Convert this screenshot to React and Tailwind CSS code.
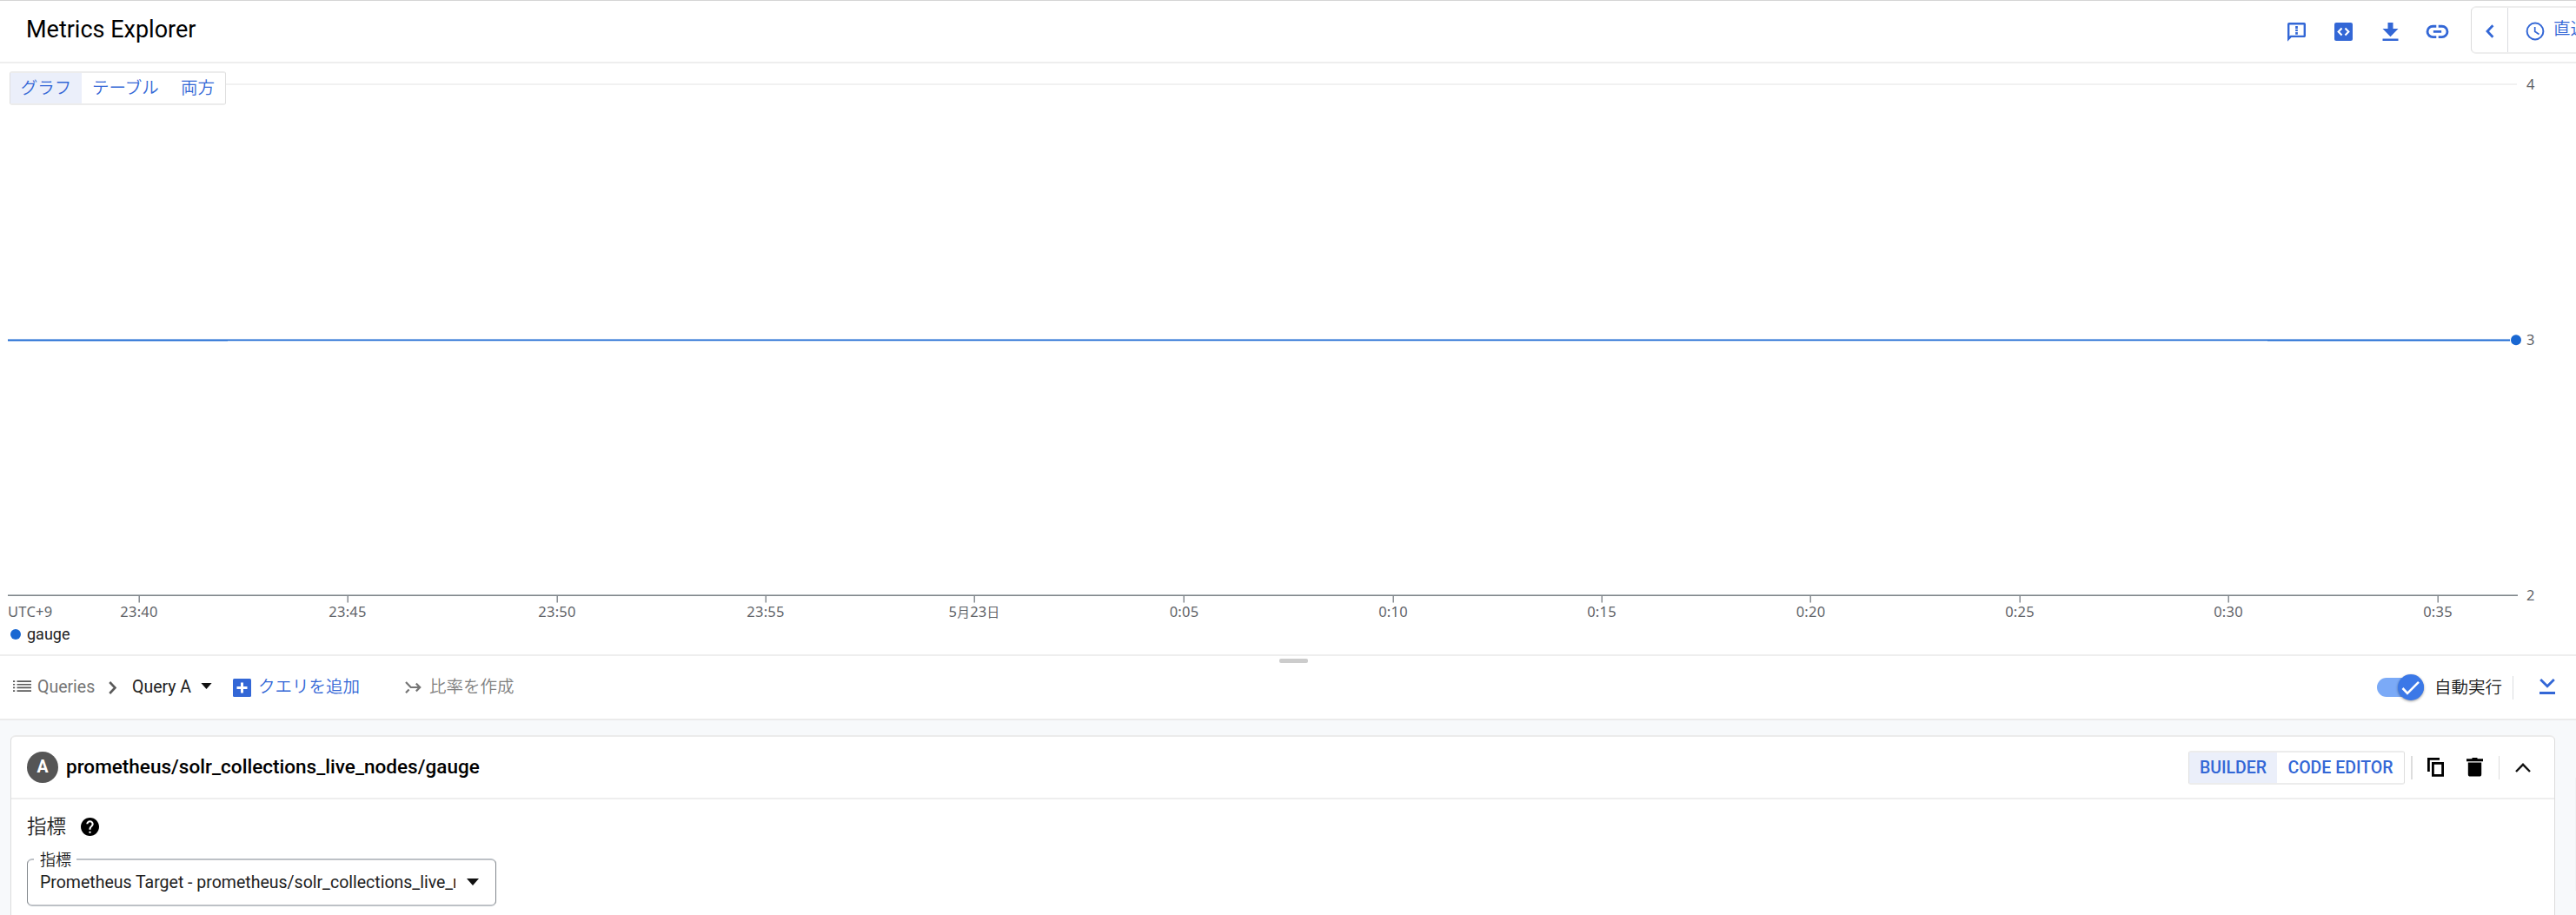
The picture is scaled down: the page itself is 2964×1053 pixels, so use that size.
import React from "react";

const JA = "font-[350]";

const ticks = [
  [160, "23:40"],
  [400, "23:45"],
  [641, "23:50"],
  [881, "23:55"],
  [1121, null],
  [1362.5, "0:05"],
  [1603, "0:10"],
  [1843, "0:15"],
  [2083.5, "0:20"],
  [2324, "0:25"],
  [2564, "0:30"],
  [2805, "0:35"],
];

function Icon({ children, className = "" }) {
  return (
    <svg viewBox="0 0 18 18" className={`size-[27px] shrink-0 ${className}`} fill="currentColor">
      {children}
    </svg>
  );
}

function Header() {
  return (
    <header className="flex h-[73px] items-center border-t border-b-2 border-t-[#d5d5d5] border-b-[#eeeeee] pl-[30px]">
      <h1 className="pb-[3px] text-[27px] leading-none text-black">Metrics Explorer</h1>
      <div className="ml-auto flex items-center gap-[27px] text-[#3367d6]">
        <Icon>
          <path d="M3.2 2.8h11.6a.4.4 0 0 1 .4.4v9a.4.4 0 0 1-.4.4H4.6L2.8 14.5V3.2a.4.4 0 0 1 .4-.4z" fill="none" stroke="currentColor" strokeWidth="1.6" />
          <path d="M2 12.5h3.3L2 16z M8.1 4.6h1.8v2.3H8.1z M8.1 7.3h1.8v1.4H8.1z M8.1 9.4h1.8v1.8H8.1z" />
        </Icon>
        <Icon>
          <rect x="2" y="2" width="14" height="14" rx="1.4" />
          <path d="M7.7 6.4 5.1 9l2.6 2.6M10.3 6.4 12.9 9l-2.6 2.6" fill="none" stroke="#fff" strokeWidth="1.4" />
        </Icon>
        <Icon>
          <path d="M7 2h4v4.6h4L9 12.9 3 6.6h4zM3 14.3h12V16H3z" />
        </Icon>
        <Icon>
          <path d="M8.2 4.8H5.5a4.15 4.15 0 0 0 0 8.3h2.7M9.8 4.8h2.7a4.15 4.15 0 0 1 0 8.3H9.8M5.9 8.95h6.2" fill="none" stroke="currentColor" strokeWidth="1.9" />
        </Icon>
      </div>
      <div className="mb-1 ml-[25px] flex h-[55px] w-[121px] items-stretch overflow-hidden rounded-l-[6px] border-y-2 border-l border-y-[#eeeeee] border-l-[#dcdcdc] text-[#3367d6]">
        <div className="flex w-[42px] shrink-0 items-center justify-center border-r border-[#dadce0]">
          <svg viewBox="0 0 10 16" className="mt-1 h-4 w-2.5" fill="none" stroke="currentColor" strokeWidth="2.8">
            <path d="M8.4 1.2 2 8l6.4 6.8" />
          </svg>
        </div>
        <div className="flex shrink-0 items-center pl-[19px]">
          <svg viewBox="0 0 24 24" className="mt-1 size-6" fill="none" stroke="currentColor" strokeWidth="2">
            <circle cx="12" cy="12" r="9.4" />
            <path d="M11.7 7v5.3l4.8 3.2" strokeWidth="1.7" />
          </svg>
          <span className={`ml-[9px] text-[19.5px] leading-none whitespace-nowrap ${JA}`}>直近</span>
        </div>
      </div>
    </header>
  );
}

function ViewTabs() {
  return (
    <div className={`absolute top-[9px] left-[11px] flex h-[39px] w-[249px] items-stretch rounded-[3px] border-x border-y-2 border-x-[#dfdfdf] border-y-[#ececec] bg-white text-[19.5px] text-[#3367d6] ${JA}`}>
      <span className="flex w-[82px] items-center justify-center bg-[#ebeffa] leading-none">グラフ</span>
      <span className="flex items-center pl-3 leading-none">テーブル</span>
      <span className="ml-auto flex items-center pr-3 leading-none">両方</span>
    </div>
  );
}

function Chart() {
  return (
    <section className="relative h-[682px] border-b-2 border-[#eeeeee]">
      <svg viewBox="0 73 2964 645" className="block h-[645px] w-full font-['Noto_Sans','Noto_Sans_CJK_JP',sans-serif] text-[16.5px] tracking-[0.25px]" fill="#5f6368">
        <rect x="11" y="96" width="2885" height="2" fill="#f1f1f1" />
        <rect x="9" y="390" width="2879" height="3" fill="#8cb3e8" />
        <rect x="9" y="391" width="2879" height="1" fill="#1967d2" />
        <rect x="262" y="392" width="2347" height="1" fill="#c5d9f3" />
        <circle cx="2895" cy="391.3" r="6" fill="#1967d2" />
        <rect x="9" y="684" width="2888" height="1" fill="#b4b9bd" />
        <rect x="9" y="685" width="2888" height="1" fill="#80868b" />
        {ticks.map(([x, label]) => (
          <g key={x}>
            <rect x={Math.floor(x) - 0.5} y="686" width="1.4" height="7.5" fill="#80868b" />
            {label ? (
              <text x={x} y="710" textAnchor="middle">{label}</text>
            ) : (
              <text x={x} y="710" textAnchor="middle">
                5<tspan fontSize="14.6">月</tspan>23<tspan fontSize="14.6">日</tspan>
              </text>
            )}
          </g>
        ))}
        <text x="9" y="710">UTC+9</text>
        <text x="2907" y="102.5">4</text>
        <text x="2907" y="397">3</text>
        <text x="2907" y="691">2</text>
      </svg>
      <div className="flex h-[23px] items-center pl-3">
        <span className="size-3 rounded-full bg-[#1967d2]" />
        <span className="ml-[7px] text-[18px] leading-none text-[#212121]">gauge</span>
      </div>
      <ViewTabs />
    </section>
  );
}

function QueryBar() {
  return (
    <div className="relative flex h-[74px] items-center border-b-2 border-[#ebebeb] text-[19.5px] leading-none whitespace-nowrap text-[#757575]">
      <div className="absolute top-[3px] left-[1472px] h-[5px] w-[33px] rounded-[2px] bg-[#cccccc]" />
      <svg viewBox="0 0 21 13" className="ml-[15px] h-[13px] w-[21px] -translate-y-0.5" fill="#5a5a5a">
        <path d="M0 .2h2.2v1.7H0zM0 3.9h2.2v1.7H0zM0 7.5h2.2v1.7H0zM0 11.2h2.2v1.7H0zM4.5.2H21v1.7H4.5zM4.5 3.9H21v1.7H4.5zM4.5 7.5H21v1.7H4.5zM4.5 11.2H21v1.7H4.5z" />
      </svg>
      <span className="ml-[7px] w-[67px]">Queries</span>
      <svg viewBox="0 0 9 15" className="ml-[15px] h-[15px] w-[9px]" fill="none" stroke="#5a5a5a" strokeWidth="2.6">
        <path d="M1.2 1 7.4 7.5 1.2 14" />
      </svg>
      <span className="ml-[18px] w-[68px] text-[#212121]">Query A</span>
      <svg viewBox="0 0 14 8" className="ml-[11px] h-[7px] w-[13px] -translate-y-0.5" fill="#111">
        <path d="M0 0h14L7 8z" />
      </svg>
      <svg viewBox="0 0 21 21" className="ml-6 size-[21px]" fill="#3367d6">
        <rect width="21" height="21" rx="1.5" />
        <path d="M10.5 4.5v12M4.5 10.5h12" stroke="#fff" strokeWidth="3" />
      </svg>
      <span className={`ml-2 w-[117px] text-[#3367d6] ${JA}`}>クエリを追加</span>
      <svg viewBox="0 0 19 14" className="ml-[52px] h-[14px] w-[19px]" fill="none" stroke="#757575" strokeWidth="2.2">
        <path d="M1 .9 6.7 7H17M12.8 2.6 17.2 7l-4.4 4.4M1 13.2l3.6-3.7" />
      </svg>
      <span className={`ml-[9px] text-[#808080] ${JA}`}>比率を作成</span>

      <div className="mr-6 ml-auto flex items-center">
        <div className="flex h-[22px] w-[54px] items-center justify-end rounded-full bg-[#7baaf7]">
          <div className="flex size-[30px] shrink-0 items-center justify-center rounded-full bg-[#3b78e7] shadow-[0_1px_3px_rgba(0,0,0,0.4)]">
            <svg viewBox="0 0 22 18" className="mt-0.5 h-[18px] w-[22px]" fill="none" stroke="#fff" strokeWidth="2.6">
              <path d="m1.5 9 5.5 5.8L20 1.8" />
            </svg>
          </div>
        </div>
        <span className={`ml-3 w-[79px] pt-0.5 text-[#212121] ${JA}`}>自動実行</span>
        <div className="ml-[11px] h-[27px] w-px bg-[#dadce0]" />
        <svg viewBox="0 0 18 18" className="ml-[30px] size-[18px] -translate-y-px" fill="none" stroke="#3367d6" strokeWidth="2.8">
          <path d="M1.2 1 9 8.8 16.8 1M0 16.5h18" />
        </svg>
      </div>
    </div>
  );
}

function QueryCard() {
  return (
    <div className="relative h-[224px] overflow-hidden bg-[#f7f9fb]">
      <div className="mt-[17px] ml-3 h-[260px] w-[2928px] rounded-[6px] border-x border-t-2 border-x-[#dcdcdc] border-t-[#ebebeb] bg-white">
        <div className="flex h-[72px] items-center border-b-2 border-[#eeeeee] pl-[18px]">
          <div className="flex size-9 items-center justify-center rounded-full bg-[#555555] text-[19.5px] leading-none font-bold text-white">A</div>
          <span className="ml-[9px] pb-0.5 text-[22.5px] leading-none font-medium tracking-[0.02px] text-black">prometheus/solr_collections_live_nodes/gauge</span>
          <div className="ml-auto flex h-[39px] w-[249px] items-stretch rounded-[3px] border-x border-y-2 border-x-[#dfdfdf] border-y-[#ececec] text-[19.5px] leading-none font-medium text-[#3367d6]">
            <span className="flex w-[101px] items-center justify-center bg-[#ebeffa] pt-0.5">BUILDER</span>
            <span className="flex flex-1 items-center justify-center pt-0.5">CODE EDITOR</span>
          </div>
          <div className="ml-[7px] h-[27px] w-0.5 bg-[#dddddd]" />
          <svg viewBox="0 0 19 22" className="ml-[17px] h-[22px] w-[19px]" fill="none" stroke="#000" strokeWidth="2.8">
            <path d="M1.4 16V1.4H14M6.4 6.4h11.2v14H6.4z" />
          </svg>
          <svg viewBox="0 0 19 22" className="ml-[26px] h-[22px] w-[19px]" fill="#000">
            <path d="M6.5 0h6v1.2H19v3H0v-3h6.5zM1.8 5.4h15.4V19a2.6 2.6 0 0 1-2.6 2.6H4.4A2.6 2.6 0 0 1 1.8 19z" />
          </svg>
          <div className="ml-[18px] h-[27px] w-px bg-[#dddddd]" />
          <svg viewBox="0 0 18 11" className="mr-[27px] ml-[18px] h-[11px] w-[18px]" fill="none" stroke="#111" strokeWidth="2.4">
            <path d="M1 10 9 1.8l8 8.2" />
          </svg>
        </div>
        <div className="pt-5 pl-[18px]">
          <div className="flex h-[22px] items-center">
            <span className={`text-[22.5px] leading-none text-[#212121] ${JA}`}>指標</span>
            <svg viewBox="2 2 20 20" className="ml-[17px] size-[21px]" fill="#000">
              <path d="M12 2C6.48 2 2 6.48 2 12s4.48 10 10 10 10-4.48 10-10S17.52 2 12 2zm1 17h-2v-2h2v2zm2.07-7.75-.9.92C13.45 12.9 13 13.5 13 15h-2v-.5c0-1.1.45-2.1 1.17-2.83l1.24-1.26c.37-.36.59-.86.59-1.41 0-1.1-.9-2-2-2s-2 .9-2 2H8c0-2.21 1.79-4 4-4s4 1.79 4 4c0 .88-.36 1.68-.93 2.25z" />
            </svg>
          </div>
          <div className="relative mt-[26px] flex h-[55px] w-[540px] items-center rounded-[6px] border-x border-y-2 border-x-[#80868b] border-y-[#bdc1c6] pl-3.5">
            <span className={`absolute -top-2.5 left-[7px] w-[49px] bg-white pl-[7px] text-[18px] leading-[20px] text-[#212121] ${JA}`}>指標</span>
            <span className="w-[478px] overflow-hidden text-[19.5px] leading-[26px] whitespace-nowrap text-[#212121]">Prometheus Target - prometheus/solr_collections_live_nodes/gauge</span>
            <svg viewBox="0 0 14 8" className="ml-[13px] h-2 w-3.5 -translate-y-px" fill="#111">
              <path d="M0 0h14L7 8z" />
            </svg>
          </div>
        </div>
      </div>
      <div className="absolute top-[66px] right-0 h-[130px] w-px bg-[#f1f3f4]" />
    </div>
  );
}

export default function App() {
  return (
    <div className="h-[1053px] w-full overflow-hidden bg-white font-['Roboto','Noto_Sans_CJK_JP',sans-serif] antialiased">
      <Header />
      <Chart />
      <QueryBar />
      <QueryCard />
    </div>
  );
}
